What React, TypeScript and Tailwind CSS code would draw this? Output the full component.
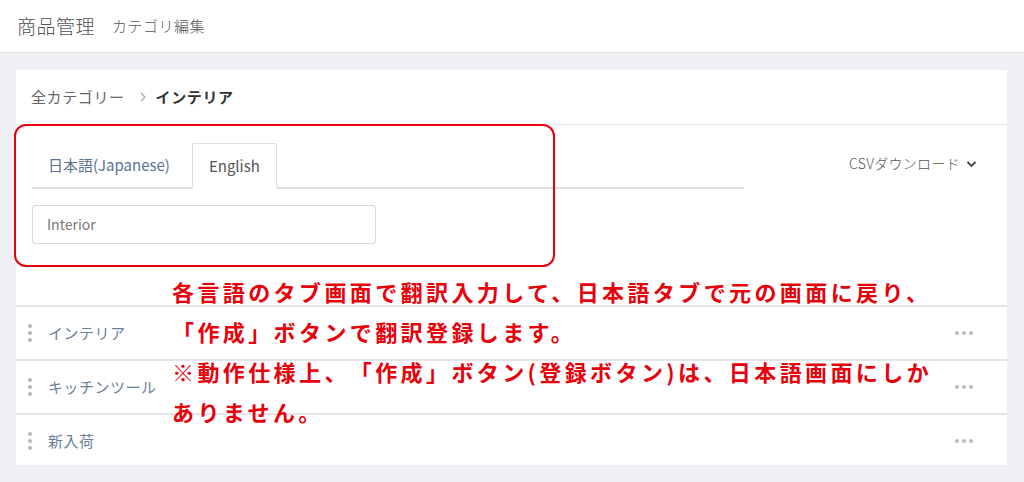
import React from "react";

const rows = ["インテリア", "キッチンツール", "新入荷"];

const notes = [
  "各言語のタブ画面で翻訳入力して、日本語タブで元の画面に戻り、",
  "「作成」ボタンで翻訳登録します。",
  "※動作仕様上、「作成」ボタン(登録ボタン)は、日本語画面にしか",
  "ありません。",
];

const DragHandle = () => (
  <div className="flex flex-col gap-[3px] w-[4px]">
    <span className="block w-[4px] h-[4px] rounded-full bg-[#b3b7bd]" />
    <span className="block w-[4px] h-[4px] rounded-full bg-[#b3b7bd]" />
    <span className="block w-[4px] h-[4px] rounded-full bg-[#b3b7bd]" />
  </div>
);

const MoreDots = () => (
  <div className="flex gap-[3px]">
    <span className="block w-[4px] h-[4px] rounded-full bg-[#babdc2]" />
    <span className="block w-[4px] h-[4px] rounded-full bg-[#babdc2]" />
    <span className="block w-[4px] h-[4px] rounded-full bg-[#babdc2]" />
  </div>
);

const App: React.FC = () => {
  return (
    <div
      className="relative w-[1024px] h-[482px] overflow-hidden bg-[#eef0f3]"
      style={{ fontFamily: '"Noto Sans CJK JP", "Noto Sans", sans-serif' }}
    >
      {/* header */}
      <div className="h-[53px] bg-white border-b border-[#e3e5e8] flex items-center pl-[17px] font-light">
        <span className="text-[19px] text-[#555] tracking-[0.5px]">商品管理</span>
        <span className="ml-[17px] text-[15px] text-[#555] tracking-[0.5px]">カテゴリ編集</span>
      </div>

      <div className="pt-[17px] pl-[16px] pr-[17px]">
        <div className="bg-white h-[395px]">
          {/* breadcrumb */}
          <div className="h-[55px] border-b border-[#e1e3e6] flex items-center pl-[15px] text-[15px] tracking-[0.6px]">
            <span className="text-[#666]">全カテゴリー</span>
            <span className="ml-[13px] mr-[8px] text-[#aaa]">
              <svg width="10" height="12" viewBox="0 0 10 12" fill="none" stroke="#aaa" strokeWidth="1.3">
                <path d="M3 2l4 4-4 4" />
              </svg>
            </span>
            <span className="font-bold text-[#333]">インテリア</span>
          </div>

          {/* tabs area */}
          <div className="h-[180px] pt-[19px] pl-[16px] pr-[30px]">
            <div className="flex items-start">
              <div className="w-[712px]">
                <div className="flex items-end h-[45px] border-b-2 border-[#dcdee1]">
                  <div className="h-[43px] flex items-center pl-[16px] pr-[22px] text-[15px] text-[#5a7195]">
                    日本語(Japanese)
                  </div>
                  <div className="h-[46px] -mb-[2px] flex items-center px-[16px] text-[15px] text-[#555] bg-white border border-[#dcdee1] border-b-white rounded-t-[2px]">
                    English
                  </div>
                </div>
                <div className="mt-[16px] w-[344px] h-[39px] border border-[#d6d8db] rounded-[3px] flex items-center pl-[14px] text-[14px] text-[#777]">
                  Interior
                </div>
              </div>
              <div className="ml-auto mt-[9px] flex items-center text-[14px] tracking-[0.3px] text-[#555] font-light">
                CSVダウンロード
                <svg className="ml-[6px]" width="11" height="8" viewBox="0 0 11 8" fill="none" stroke="#444" strokeWidth="1.8">
                  <path d="M1.5 2l4 4 4-4" />
                </svg>
              </div>
            </div>
          </div>

          {/* list */}
          {rows.map((r) => (
            <div key={r} className="h-[54px] border-t-2 border-[#e3e5e8] flex items-center pl-[12px] pr-[34px]">
              <DragHandle />
              <span className="ml-[16px] text-[15px] text-[#6b7f99] tracking-[0.5px]">{r}</span>
              <div className="ml-auto">
                <MoreDots />
              </div>
            </div>
          ))}
        </div>
      </div>

      {/* annotation overlay */}
      <div className="absolute left-[14px] top-[124px] w-[541px] h-[143px] border-[2.5px] border-[#e8000b] rounded-[12px] pointer-events-none" />
      <div className="absolute left-[172px] top-[271px] text-[22px] leading-[40px] font-bold text-[#e8000b] tracking-[3.4px] whitespace-nowrap [text-spacing-trim:space-all]">
        {notes.map((n) => (
          <div key={n}>{n}</div>
        ))}
      </div>
    </div>
  );
};

export default App;
